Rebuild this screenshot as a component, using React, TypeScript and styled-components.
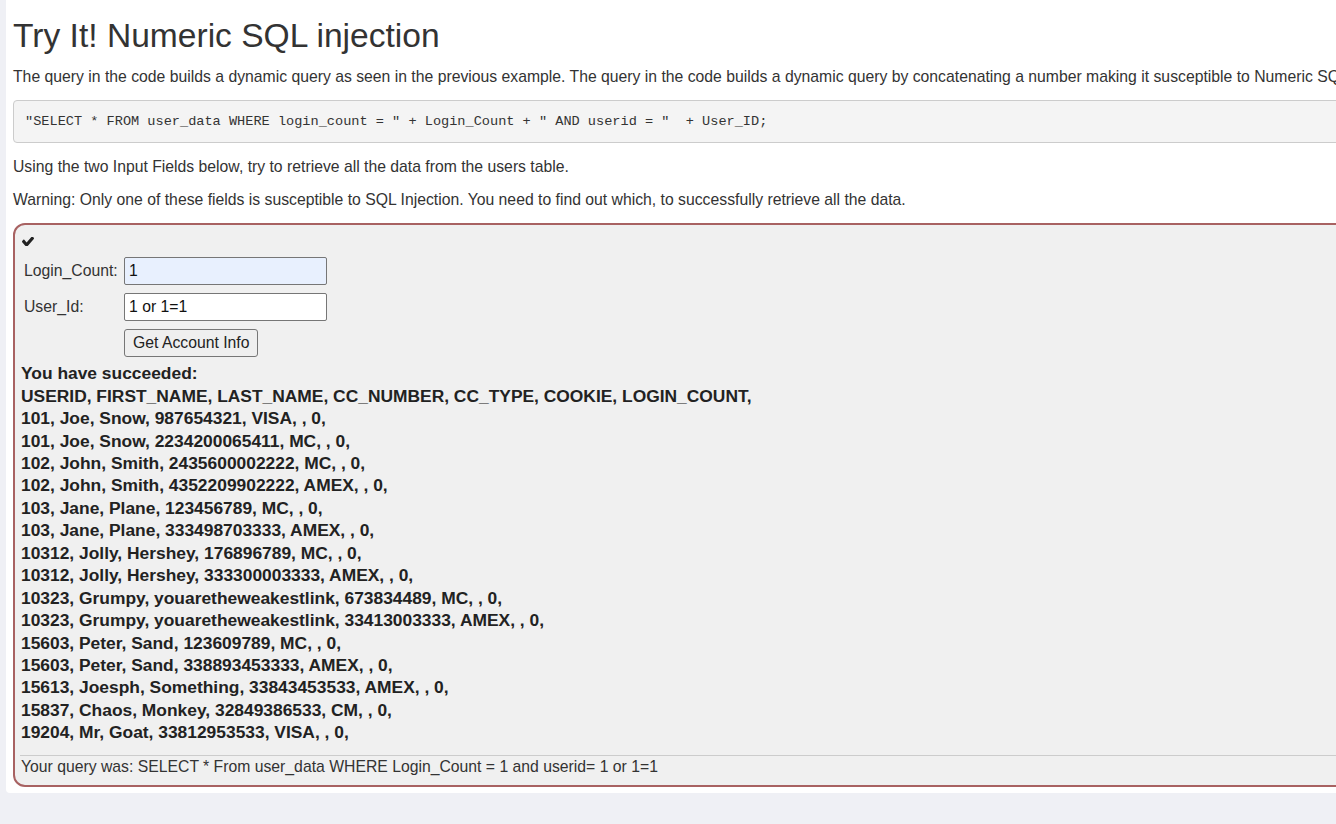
import React from "react";
import styled, { createGlobalStyle } from "styled-components";

const GlobalStyle = createGlobalStyle`
  html, body {
    margin: 0;
    padding: 0;
    background: #eff0f5;
    overflow: hidden;
  }
  body {
    font-family: "Liberation Sans", Arial, Helvetica, sans-serif;
    color: #333;
  }
`;

const Page = styled.div`
  padding-left: 6px;
  width: 1800px;
`;

const Panel = styled.div`
  display: flow-root;
  background: #ffffff;
  padding: 0 7px 6px 7px;
  border-radius: 0 0 0 4px;
`;

const Title = styled.h1`
  margin: 18px 0 12px;
  font-size: 33.6px;
  font-weight: 400;
  line-height: 36.3px;
  color: #333;
`;

const Para = styled.p`
  margin: 0 0 11px;
  font-size: 15.75px;
  line-height: 22px;
  color: #333;
  white-space: nowrap;
`;

const Code = styled.pre`
  margin: 12px 0 13px;
  padding: 10.5px 11px;
  font-family: "Liberation Mono", "Courier New", monospace;
  font-size: 13.6px;
  line-height: 20px;
  color: #333;
  background: #f4f4f4;
  border: 1px solid #cccccc;
  border-radius: 4px;
  white-space: pre;
`;

const AttackBox = styled.div`
  margin-top: 12px;
  border: 2px solid #a86262;
  border-radius: 12px;
  background: #f0f0f0;
  padding: 6px 5px 7px 5px;
`;

const Check = styled.svg`
  display: block;
  margin: 6px 0 11px 2px;
  width: 12px;
  height: 9px;
  fill: #222;
`;

const FormGrid = styled.div`
  display: grid;
  grid-template-columns: 100px 203px;
  grid-auto-rows: 28px;
  row-gap: 8px;
  align-items: center;
  padding-left: 4px;
`;

const Label = styled.label`
  font-size: 15.75px;
  color: #333;
`;

const Input = styled.input<{ $autofill?: boolean }>`
  box-sizing: border-box;
  width: 203px;
  height: 28px;
  margin: 0;
  padding: 1px 4px;
  border: 1px solid #767676;
  border-radius: 2px;
  background: ${(p) => (p.$autofill ? "#e8f0fe" : "#ffffff")};
  font-family: "Liberation Sans", Arial, sans-serif;
  font-size: 15.75px;
  color: #111;
  outline: none;
`;

const Button = styled.button`
  grid-column: 2;
  justify-self: start;
  box-sizing: border-box;
  height: 28px;
  margin: 0;
  padding: 0 8px;
  border: 1px solid #767676;
  border-radius: 3px;
  background: #efefef;
  font-family: "Liberation Sans", Arial, sans-serif;
  font-size: 15.75px;
  color: #222;
`;

const Results = styled.div`
  margin-top: 5px;
  padding-left: 1px;
  font-size: 17.4px;
  font-weight: 700;
  line-height: 22.44px;
  color: #222;
`;

const Rule = styled.hr`
  margin: 11px 0 0;
  border: 0;
  border-top: 1px solid #cccccc;
`;

const QueryLine = styled.div`
  padding-left: 1px;
  font-size: 15.75px;
  line-height: 22px;
  color: #333;
`;

const rows = [
  "You have succeeded:",
  "USERID, FIRST_NAME, LAST_NAME, CC_NUMBER, CC_TYPE, COOKIE, LOGIN_COUNT,",
  "101, Joe, Snow, 987654321, VISA, , 0,",
  "101, Joe, Snow, 2234200065411, MC, , 0,",
  "102, John, Smith, 2435600002222, MC, , 0,",
  "102, John, Smith, 4352209902222, AMEX, , 0,",
  "103, Jane, Plane, 123456789, MC, , 0,",
  "103, Jane, Plane, 333498703333, AMEX, , 0,",
  "10312, Jolly, Hershey, 176896789, MC, , 0,",
  "10312, Jolly, Hershey, 333300003333, AMEX, , 0,",
  "10323, Grumpy, youaretheweakestlink, 673834489, MC, , 0,",
  "10323, Grumpy, youaretheweakestlink, 33413003333, AMEX, , 0,",
  "15603, Peter, Sand, 123609789, MC, , 0,",
  "15603, Peter, Sand, 338893453333, AMEX, , 0,",
  "15613, Joesph, Something, 33843453533, AMEX, , 0,",
  "15837, Chaos, Monkey, 32849386533, CM, , 0,",
  "19204, Mr, Goat, 33812953533, VISA, , 0,",
];

export default function App() {
  return (
    <>
      <GlobalStyle />
      <Page>
        <Panel>
          <Title>Try It! Numeric SQL injection</Title>
          <Para>
            The query in the code builds a dynamic query as seen in the previous example. The query in the code builds a
            dynamic query by concatenating a number making it susceptible to Numeric SQL injection:
          </Para>
          <Code>{'"SELECT * FROM user_data WHERE login_count = " + Login_Count + " AND userid = "  + User_ID;'}</Code>
          <Para>Using the two Input Fields below, try to retrieve all the data from the users table.</Para>
          <Para>
            Warning: Only one of these fields is susceptible to SQL Injection. You need to find out which, to successfully
            retrieve all the data.
          </Para>
          <AttackBox>
            <Check viewBox="121 402 1550 1024" preserveAspectRatio="none">
              <path d="M1671 566q0 40-28 68l-724 724-136 136q-28 28-68 28t-68-28l-136-136-362-362q-28-28-28-68t28-68l136-136q28-28 68-28t68 28l294 295 656-657q28-28 68-28t68 28l136 136q28 28 28 68z" />
            </Check>
            <FormGrid>
              <Label>Login_Count:</Label>
              <Input $autofill defaultValue="1" />
              <Label>User_Id:</Label>
              <Input defaultValue="1 or 1=1" />
              <Button>Get Account Info</Button>
            </FormGrid>
            <Results>
              {rows.map((r) => (
                <div key={r}>{r}</div>
              ))}
            </Results>
            <Rule />
            <QueryLine>Your query was: SELECT * From user_data WHERE Login_Count = 1 and userid= 1 or 1=1</QueryLine>
          </AttackBox>
        </Panel>
      </Page>
    </>
  );
}
